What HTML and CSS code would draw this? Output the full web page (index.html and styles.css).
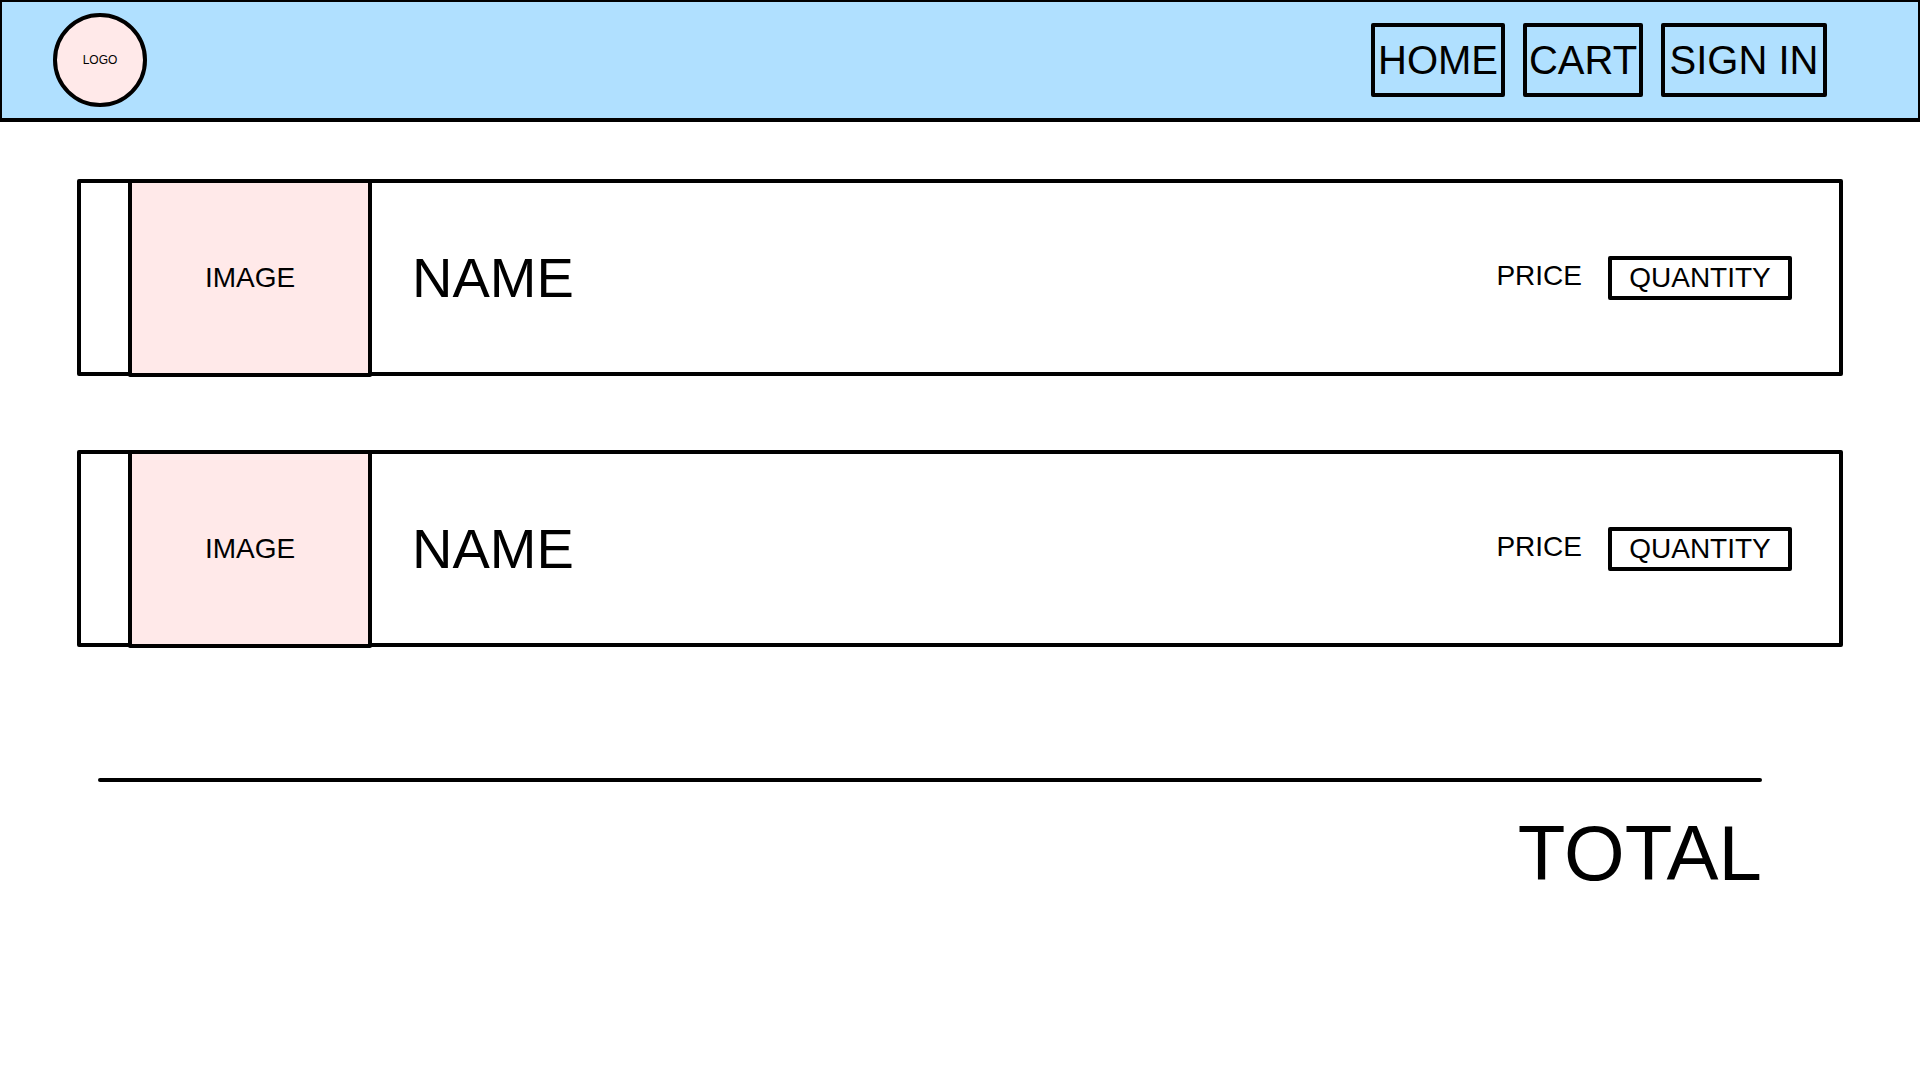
FILE: index.html
```html
<!DOCTYPE html>
<html lang="en">
<head>
  <meta charset="utf-8">
  <meta name="viewport" content="width=device-width, initial-scale=1">
  <title>Cart</title>
  <link rel="stylesheet" href="styles.css">
</head>
<body>
  <header class="header">
    <a class="logo" href="#">LOGO</a>
    <nav class="nav">
      <a class="nav-link nav-home" href="#">HOME</a>
      <a class="nav-link nav-cart" href="#">CART</a>
      <a class="nav-link nav-sign-in" href="#">SIGN IN</a>
    </nav>
  </header>
  <main class="main">
    <ul class="items">
      <li class="item">
        <div class="item-image">IMAGE</div>
        <h2 class="item-name">NAME</h2>
        <span class="item-price">PRICE</span>
        <input class="item-quantity" type="text" placeholder="QUANTITY" aria-label="Quantity of first item">
      </li>
      <li class="item">
        <div class="item-image">IMAGE</div>
        <h2 class="item-name">NAME</h2>
        <span class="item-price">PRICE</span>
        <input class="item-quantity" type="text" placeholder="QUANTITY" aria-label="Quantity of second item">
      </li>
    </ul>
    <section class="summary">
      <hr class="summary-line">
      <p class="total">TOTAL</p>
    </section>
  </main>
</body>
</html>
```
FILE: styles.css
```css
* {
  box-sizing: border-box;
}

body {
  margin: 0;
  background: #fff;
  color: #000;
  font-family: "Liberation Sans", Arial, sans-serif;
  font-size: 28px;
  line-height: 32px;
}

.header {
  display: flex;
  align-items: center;
  justify-content: space-between;
  padding: 11px 91px 11px 51px;
  border: 2px solid #000;
  border-bottom-width: 4px;
  background: #b0e0ff;
}

.logo {
  display: flex;
  align-items: center;
  justify-content: center;
  width: 94px;
  height: 94px;
  border: 4px solid #000;
  border-radius: 50%;
  background: #ffe9e9;
  color: #000;
  font-size: 12px;
  text-decoration: none;
}

.nav {
  display: flex;
  gap: 18px;
}

.nav-link {
  padding: 9px 0;
  border: 4px solid #000;
  border-radius: 2px;
  color: #000;
  font-size: 40px;
  line-height: 48px;
  text-align: center;
  text-decoration: none;
  white-space: nowrap;
}

.nav-home {
  width: 134px;
}

.nav-cart {
  width: 120px;
}

.nav-sign-in {
  width: 166px;
}

.main {
  padding: 57px 77px;
}

.items {
  display: flex;
  flex-direction: column;
  gap: 74px;
  margin: 0;
  padding: 0;
  list-style: none;
}

.item {
  display: flex;
  align-items: center;
  min-height: 197px;
  padding: 0 47px;
  border: 4px solid #000;
  border-radius: 2px;
}

/* The image frame shares the card's top and bottom borders. */
.item-image {
  display: flex;
  align-items: center;
  justify-content: center;
  align-self: stretch;
  width: 244px;
  margin: -4px 0 -5px;
  border: 4px solid #000;
  border-radius: 2px;
  background: #ffe9e9;
}

.item-name {
  flex: 1;
  margin: 0 0 0 40px;
  font-size: 56px;
  font-weight: 400;
  line-height: 64px;
}

.item-price {
  padding-bottom: 4px;
}

.item-quantity {
  width: 184px;
  height: 44px;
  margin-left: 26px;
  padding: 0;
  border: 4px solid #000;
  border-radius: 2px;
  background: #fff;
  color: #000;
  font: inherit;
  text-align: center;
}

.item-quantity::placeholder {
  color: #000;
  opacity: 1;
}

.summary {
  margin: 131px 81px 0 21px;
}

.summary-line {
  height: 4px;
  margin: 0;
  border: 0;
  border-radius: 2px;
  background: #000;
}

.total {
  margin: 26px 0 0;
  font-size: 78px;
  line-height: 90px;
  text-align: right;
}
```
